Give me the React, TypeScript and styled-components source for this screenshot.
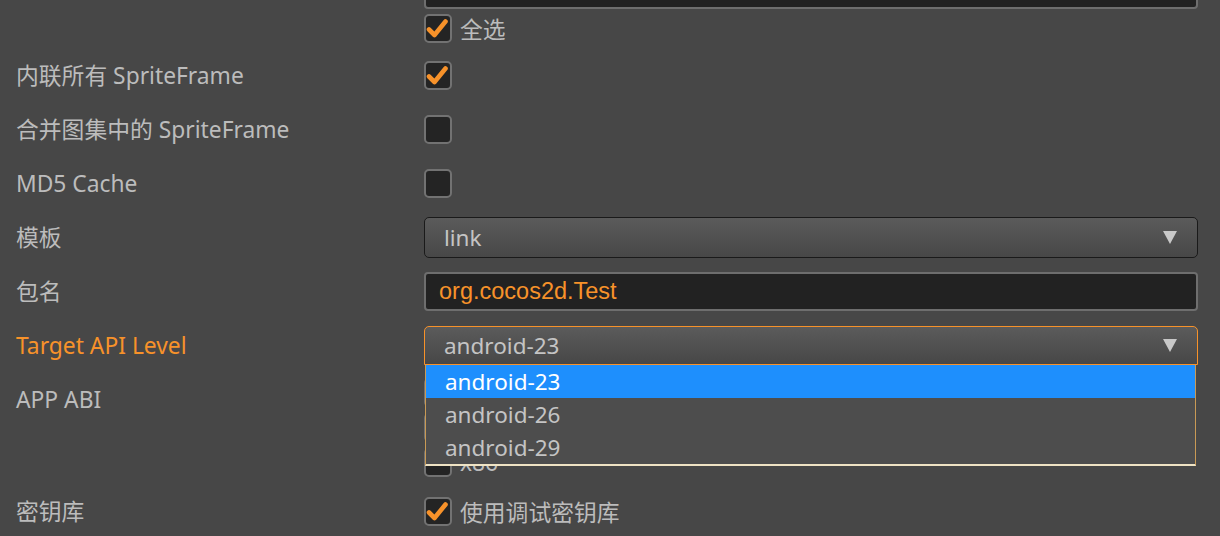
import React from "react";
import styled, { createGlobalStyle, css } from "styled-components";

const GlobalStyle = createGlobalStyle`
  html, body {
    margin: 0;
    padding: 0;
    background: #474747;
    overflow: hidden;
  }
  body {
    font-family: "Noto Sans", "Noto Sans CJK SC", sans-serif;
  }
`;

const Page = styled.div`
  width: 1220px;
  height: 536px;
  overflow: hidden;
`;

const Panel = styled.div`
  display: flex;
  flex-direction: column;
  margin-top: -37px;
  padding: 0 22px 0 16px;
`;

const Row = styled.div<{ $group?: boolean; $pad?: string }>`
  display: grid;
  grid-template-columns: 408px 1fr;
  align-items: center;
  min-height: 54px;
  ${(p) =>
    p.$group &&
    css`
      align-items: start;
      padding: ${p.$pad || "7px 0 5px"};
    `}
`;

const Label = styled.div<{ $active?: boolean; $top?: number }>`
  font-size: 22.8px;
  line-height: 30px;
  padding-top: ${(p) => (p.$top !== undefined ? p.$top : 2)}px;
  color: ${(p) => (p.$active ? "#f7922a" : "#bcbcbc")};
  white-space: nowrap;
`;

const Stack = styled.div<{ $gap: number }>`
  display: flex;
  flex-direction: column;
  gap: ${(p) => p.$gap}px;
`;

const Field = styled.div`
  position: relative;
`;

const TextInput = styled.div`
  box-sizing: border-box;
  height: 39px;
  border: 2px solid #6e6e6e;
  border-radius: 4px;
  background: #222222;
  color: #f7922a;
  font-family: "Liberation Sans", Arial, sans-serif;
  font-size: 23.5px;
  display: flex;
  align-items: center;
  padding-left: 13px;
`;

const Select = styled.div<{ $focused?: boolean; $h: number }>`
  box-sizing: border-box;
  height: ${(p) => p.$h}px;
  border: 1.5px solid ${(p) => (p.$focused ? "#f7922a" : "#1a1a1a")};
  border-radius: 5px;
  ${(p) =>
    p.$focused &&
    css`
      border-bottom-left-radius: 0;
      border-bottom-right-radius: 0;
    `}
  background: linear-gradient(#5b5b5b, #474747);
  color: #c4c4c4;
  font-size: 22.5px;
  display: flex;
  align-items: center;
  justify-content: space-between;
  padding: 0 20px 0 19px;
`;

const Arrow = styled.span`
  width: 0;
  height: 0;
  border-left: 7px solid transparent;
  border-right: 7px solid transparent;
  border-top: 13px solid #c8c8c8;
`;

const Menu = styled.ul`
  position: absolute;
  top: 100%;
  left: 1px;
  right: 2px;
  margin: 0;
  padding: 0;
  list-style: none;
  background: #4d4d4d;
  border: 1px solid #c99a55;
  border-top: none;
  border-bottom: 2px solid #efe3c4;
  z-index: 2;
`;

const Option = styled.li<{ $selected?: boolean }>`
  height: 33px;
  display: flex;
  align-items: center;
  padding-left: 19px;
  font-size: 22.5px;
  color: ${(p) => (p.$selected ? "#ffffff" : "#c4c4c4")};
  background: ${(p) => (p.$selected ? "#1e8ffd" : "transparent")};
`;

const CheckLine = styled.label`
  display: flex;
  align-items: center;
  gap: 8px;
  height: 29px;
  color: #bcbcbc;
  font-size: 22.8px;
`;

const Box = styled.span`
  box-sizing: border-box;
  width: 28px;
  height: 29px;
  flex: none;
  border: 2px solid #727272;
  border-radius: 5px;
  background: #242424;
  display: flex;
`;

const Check: React.FC<{ checked?: boolean; text?: string }> = ({ checked, text }) => (
  <CheckLine>
    <Box>
      {checked && (
        <svg width="24" height="25" viewBox="2 2 24 25">
          <path
            d="M5 15.5 L10.5 21 L21.5 7.5"
            fill="none"
            stroke="#f7922a"
            strokeWidth="4.6"
            strokeLinecap="round"
            strokeLinejoin="round"
          />
        </svg>
      )}
    </Box>
    {text && <span>{text}</span>}
  </CheckLine>
);

const apiLevels = ["android-23", "android-26", "android-29"];

export default function App() {
  return (
    <Page>
      <GlobalStyle />
      <Panel>
        <Row $group>
          <Label />
          <Stack $gap={5}>
            <TextInput />
            <Check checked text="全选" />
          </Stack>
        </Row>
        <Row>
          <Label>内联所有 SpriteFrame</Label>
          <Check checked />
        </Row>
        <Row>
          <Label>合并图集中的 SpriteFrame</Label>
          <Check />
        </Row>
        <Row>
          <Label>MD5 Cache</Label>
          <Check />
        </Row>
        <Row>
          <Label>模板</Label>
          <Select $h={41}>
            <span>link</span>
            <Arrow />
          </Select>
        </Row>
        <Row>
          <Label>包名</Label>
          <TextInput>org.cocos2d.Test</TextInput>
        </Row>
        <Row>
          <Label $active>Target API Level</Label>
          <Field>
            <Select $focused $h={39}>
              <span>android-23</span>
              <Arrow />
            </Select>
            <Menu>
              {apiLevels.map((lvl, i) => (
                <Option key={lvl} $selected={i === 0}>
                  {lvl}
                </Option>
              ))}
            </Menu>
          </Field>
        </Row>
        <Row $group $pad="6px 0 7px">
          <Label $top={7}>APP ABI</Label>
          <Stack $gap={6}>
            <Check checked text="armeabi-v7a" />
            <Check text="arm64-v8a" />
            <Check text="x86" />
          </Stack>
        </Row>
        <Row>
          <Label>密钥库</Label>
          <Check checked text="使用调试密钥库" />
        </Row>
      </Panel>
    </Page>
  );
}
